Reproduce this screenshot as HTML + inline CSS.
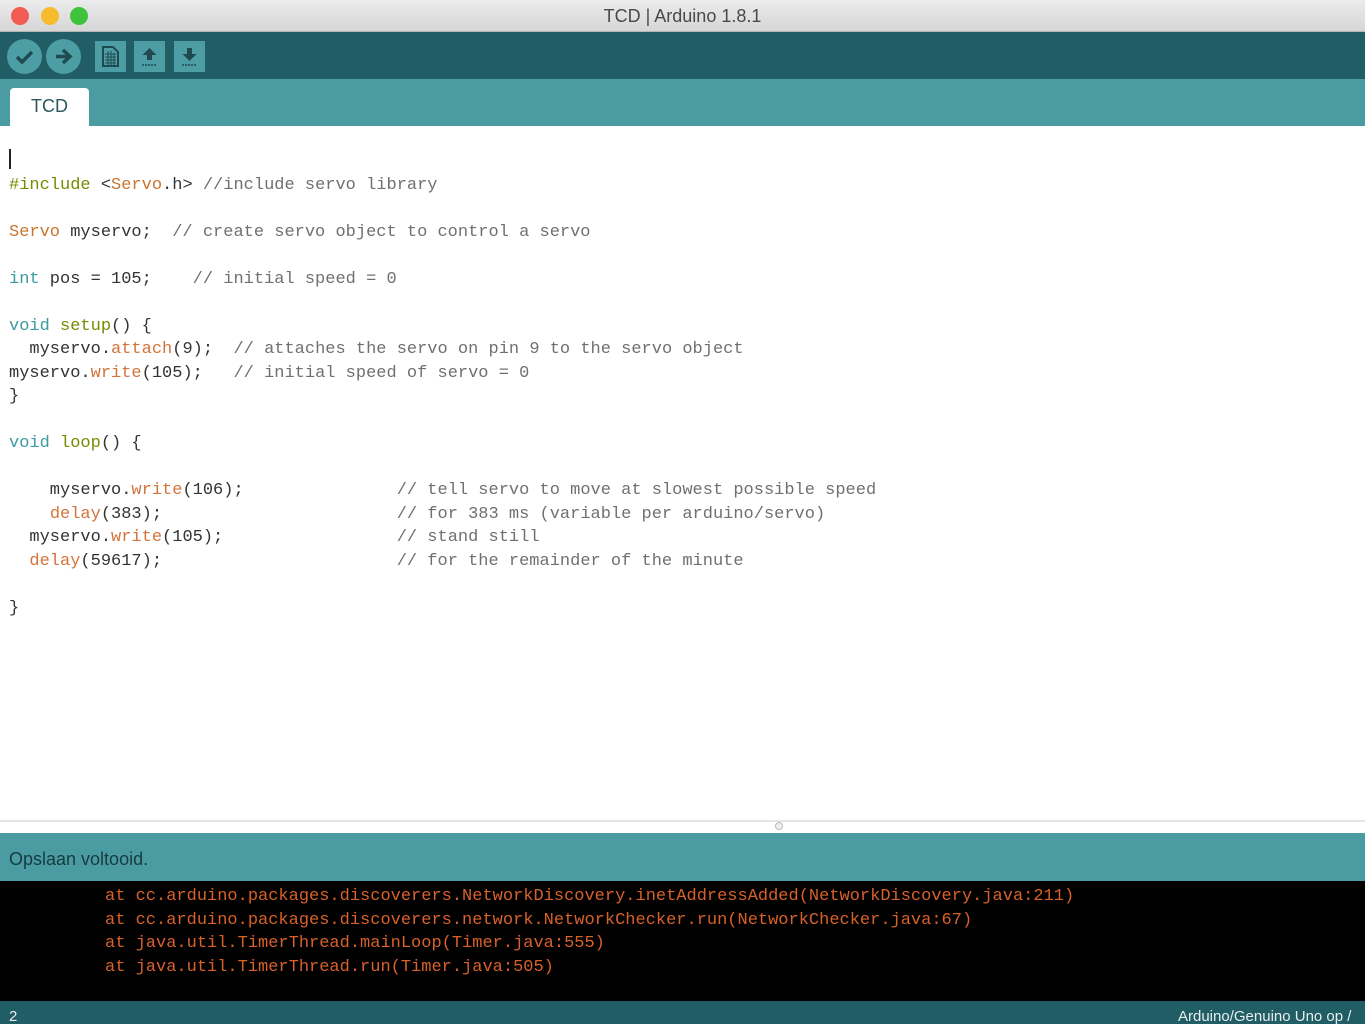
<!DOCTYPE html>
<html><head><meta charset="utf-8"><style>
*{margin:0;padding:0;box-sizing:border-box}
body{width:1365px;height:1024px;overflow:hidden;background:#fff;font-family:"Liberation Sans",sans-serif;position:relative}
.title{position:absolute;left:0;top:0;width:1365px;height:32px;background:linear-gradient(#ececec,#d6d6d6);border-bottom:1px solid #b5b5b5;text-align:center;font-size:18px;line-height:33px;color:#4a4a4a}
.dot{position:absolute;top:7px;width:18px;height:18px;border-radius:50%}
.tb{position:absolute;left:0;top:32px;width:1365px;height:47px;background:#205d65}
.rb{position:absolute;top:39px;width:35px;height:35px;border-radius:50%;background:#4c9ea4}
.sq{position:absolute;top:41px;width:31px;height:31px;background:#4c9ea4}
.tabbar{position:absolute;left:0;top:79px;width:1365px;height:47px;background:#4a9ca2}
.tab{position:absolute;left:10px;top:88px;width:79px;height:38px;background:#fff;border-radius:4px 4px 0 0;color:#2a5a5e;font-size:18px;text-align:center;line-height:36px}
pre{position:absolute;left:9px;top:149px;font-family:"Liberation Mono",monospace;font-size:17px;line-height:23.5px;color:#333}
.k{color:#3c9aa0}.f{color:#728e00}.o{color:#d4733a}.c{color:#707070}.s{color:#c8742e}
.cur{display:inline-block;width:2px;height:20px;background:#222;vertical-align:-4px}
.sep{position:absolute;left:0;top:820px;width:1365px;height:2px;background:#e4e4e4}
.status{position:absolute;left:0;top:833px;width:1365px;height:48px;background:#4a9ca2;color:#173c40;font-size:18px;line-height:52px;padding-left:9px}
.con{position:absolute;left:0;top:881px;width:1365px;height:120px;background:#000}
.con pre{left:105px;top:4px;color:#d8612a}
.bot{position:absolute;left:0;top:1001px;width:1365px;height:23px;background:#205d65;color:#e6eeee;font-size:15px;line-height:32px}
</style></head><body>
<div class="title">TCD | Arduino 1.8.1
<div class="dot" style="left:11px;background:#f25a52"></div>
<div class="dot" style="left:41px;background:#f7bb2e"></div>
<div class="dot" style="left:70px;background:#3fc33c"></div>
</div>
<div class="tb"></div>
<div class="rb" style="left:7px"><svg width="35" height="35"><path d="M10 18l5 5 10-10" stroke="#1f4a50" stroke-width="3.5" fill="none"/></svg></div>
<div class="rb" style="left:46px"><svg width="35" height="35"><path d="M10 17.5h12M17 11l7 6.5-7 6.5" stroke="#1f4a50" stroke-width="3.5" fill="none"/></svg></div>
<div class="sq" style="left:95px"><svg width="31" height="31"><path d="M8 6h10l5 5v14H8z" fill="none" stroke="#1f4a50" stroke-width="2"/><path d="M10 13h11M10 16h11M10 19h11M10 22h11M13 10v14M16 10v14M19 12v12" stroke="#1f4a50" stroke-width="1"/></svg></div>
<div class="sq" style="left:134px"><svg width="31" height="31"><path d="M15.5 7l-7 7h4.5v5h5v-5h4.5z" fill="#1f4a50"/><path d="M8 24h15" stroke="#1f4a50" stroke-width="1.5" stroke-dasharray="2 1"/></svg></div>
<div class="sq" style="left:174px"><svg width="31" height="31"><path d="M15.5 20l-7-7h4.5V7h5v6h4.5z" fill="#1f4a50"/><path d="M8 24h15" stroke="#1f4a50" stroke-width="1.5" stroke-dasharray="2 1"/></svg></div>
<div class="tabbar"></div>
<div class="tab">TCD</div>
<pre><span class="cur"></span>
<span class="f">#include</span> &lt;<span class="s">Servo</span>.h&gt; <span class="c">//include servo library</span>

<span class="s">Servo</span> myservo;  <span class="c">// create servo object to control a servo</span>

<span class="k">int</span> pos = 105;    <span class="c">// initial speed = 0</span>

<span class="k">void</span> <span class="f">setup</span>() {
  myservo.<span class="o">attach</span>(9);  <span class="c">// attaches the servo on pin 9 to the servo object</span>
myservo.<span class="o">write</span>(105);   <span class="c">// initial speed of servo = 0</span>
}

<span class="k">void</span> <span class="f">loop</span>() {

    myservo.<span class="o">write</span>(106);               <span class="c">// tell servo to move at slowest possible speed</span>
    <span class="o">delay</span>(383);                       <span class="c">// for 383 ms (variable per arduino/servo)</span>
  myservo.<span class="o">write</span>(105);                 <span class="c">// stand still</span>
  <span class="o">delay</span>(59617);                       <span class="c">// for the remainder of the minute</span>

}</pre>
<div class="sep"></div>
<div style="position:absolute;left:775px;top:822px;width:8px;height:8px;border-radius:50%;border:1px solid #bbb;background:#eee"></div>
<div class="status">Opslaan voltooid.</div>
<div class="con"><pre>at cc.arduino.packages.discoverers.NetworkDiscovery.inetAddressAdded(NetworkDiscovery.java:211)
at cc.arduino.packages.discoverers.network.NetworkChecker.run(NetworkChecker.java:67)
at java.util.TimerThread.mainLoop(Timer.java:555)
at java.util.TimerThread.run(Timer.java:505)</pre></div>
<div class="bot"><span style="position:absolute;left:9px">2</span><span style="position:absolute;left:1178px;white-space:nowrap">Arduino/Genuino Uno op /</span></div>
</body></html>
